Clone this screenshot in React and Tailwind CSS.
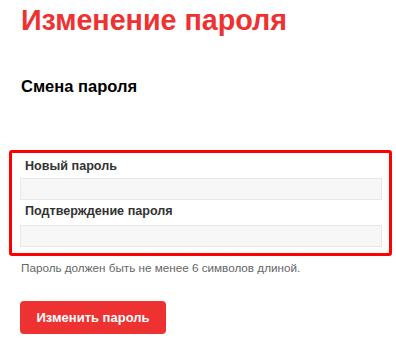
export default function App() {
  return (
    <div className="w-[396px] h-[358px] bg-white overflow-hidden" style={{ fontFamily: '"Liberation Sans", Arial, sans-serif' }}>
      <h1 className="pl-[21px] pt-[4px] text-[28.7px] leading-[32px] font-bold text-[#ee3131]">Изменение пароля</h1>
      <h2 className="pl-[21px] mt-[41px] text-[16.5px] leading-[18px] font-bold text-black">Смена пароля</h2>
      <div className="ml-[9px] mt-[55px] w-[383px] h-[106px] border-[3px] border-[#ff0000] rounded-[3px] px-[8px] pt-[5px]">
        <label className="block pl-[5px] text-[12.6px] leading-[16px] font-bold text-[#333]">Новый пароль</label>
        <div className="mt-[4px] h-[22px] w-[362px] bg-[#f7f7f7] border border-[#e8e8e8]"></div>
        <label className="block mt-[3px] pl-[5px] text-[12.6px] leading-[16px] font-bold text-[#333]">Подтверждение пароля</label>
        <div className="mt-[6px] h-[22px] w-[362px] bg-[#f7f7f7] border border-[#e8e8e8]"></div>
      </div>
      <p className="pl-[21px] mt-[5px] text-[11.7px] leading-[14px] text-[#666]">Пароль должен быть не менее 6 символов длиной.</p>
      <button className="ml-[20px] mt-[26px] w-[146px] h-[33px] rounded-[4px] bg-[#ee3131] text-white text-[13px] font-bold">Изменить пароль</button>
    </div>
  );
}
